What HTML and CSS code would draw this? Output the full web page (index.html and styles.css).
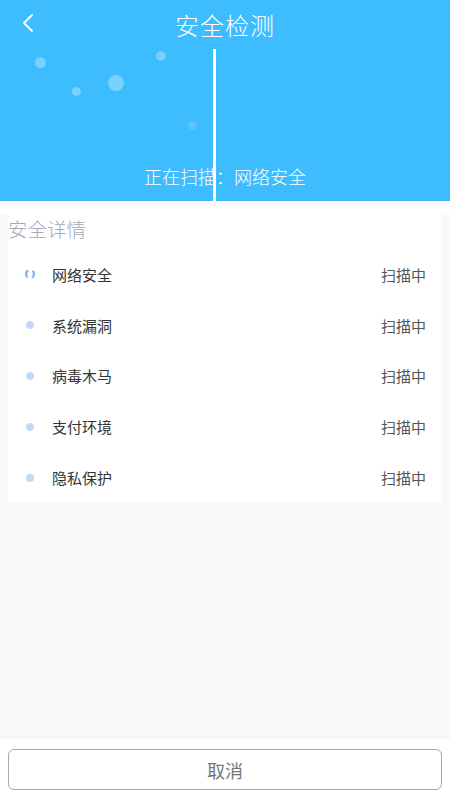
FILE: index.html
```html
<!DOCTYPE html>
<html lang="zh-CN">
<head>
    <meta charset="UTF-8">
    <meta name="viewport" content="width=device-width, initial-scale=1.0">
    <title>安全检测</title>
    <link rel="stylesheet" href="styles.css">
</head>
<body>
    <div class="header">
        <div class="nav">
            <span class="back">
                <svg width="14" height="22" viewBox="0 0 14 22"><path d="M11 3 L3 11 L11 19" fill="none" stroke="#fff" stroke-width="1.8" stroke-linecap="round" stroke-linejoin="round"/></svg>
            </span>
            <h1>安全检测</h1>
        </div>
        <div class="scan">
            <span class="bubble b1"></span>
            <span class="bubble b2"></span>
            <span class="bubble b3"></span>
            <span class="bubble b4"></span>
            <span class="bubble b5"></span>
            <span class="scan-line"></span>
            <p class="scan-text">正在扫描：网络安全</p>
        </div>
    </div>
    <div class="gap"></div>

    <div class="main">
        <div class="card">
            <h2>安全详情</h2>
            <div class="item">
                <span class="icon">
                    <svg width="12" height="12" viewBox="0 0 12 12"><circle cx="6" cy="6" r="4" fill="none" stroke="#86aef2" stroke-width="2.2" stroke-dasharray="8 4.57" stroke-dashoffset="4"/></svg>
                </span>
                <span class="name">网络安全</span>
                <span class="status">扫描中</span>
            </div>
            <div class="item">
                <span class="icon"><span class="dot"></span></span>
                <span class="name">系统漏洞</span>
                <span class="status">扫描中</span>
            </div>
            <div class="item">
                <span class="icon"><span class="dot"></span></span>
                <span class="name">病毒木马</span>
                <span class="status">扫描中</span>
            </div>
            <div class="item">
                <span class="icon"><span class="dot"></span></span>
                <span class="name">支付环境</span>
                <span class="status">扫描中</span>
            </div>
            <div class="item">
                <span class="icon"><span class="dot"></span></span>
                <span class="name">隐私保护</span>
                <span class="status">扫描中</span>
            </div>
        </div>
    </div>

    <footer>
        <button class="cancel">取消</button>
    </footer>
</body>
</html>
```

FILE: styles.css
```css
* {
    box-sizing: border-box;
}

body {
    margin: 0;
    height: 800px;
    display: flex;
    flex-direction: column;
    background-color: #f8f8f8;
    font-family: "Noto Sans CJK SC", "Noto Sans", sans-serif;
}

.header {
    background-color: #3ebdfe;
    height: 201px;
    color: #fff;
}

.nav {
    height: 49px;
    display: flex;
    align-items: center;
    justify-content: center;
    position: relative;
}

.back {
    position: absolute;
    left: 21px;
    top: 12px;
}

.nav h1 {
    margin: 0;
    font-size: 24px;
    font-weight: 300;
    letter-spacing: 1px;
}

.scan {
    height: 152px;
    position: relative;
    display: flex;
    align-items: flex-end;
    justify-content: center;
}

.scan-text {
    margin: 0 0 12px;
    font-size: 18px;
    font-weight: 300;
}

.scan-line {
    position: absolute;
    left: 213px;
    top: 0;
    width: 3px;
    height: 152px;
    background-color: #fff;
}

.bubble {
    position: absolute;
    border-radius: 50%;
    background-color: rgba(255, 255, 255, 0.3);
}
.b1 { left: 35px; top: 8px; width: 11px; height: 11px; }
.b2 { left: 72px; top: 38px; width: 9px; height: 9px; }
.b3 { left: 108px; top: 26px; width: 16px; height: 16px; }
.b4 { left: 156px; top: 2px; width: 10px; height: 10px; }
.b5 { left: 188px; top: 72px; width: 9px; height: 9px; background-color: rgba(255, 255, 255, 0.15); }

.gap {
    height: 14px;
    background-color: #fff;
}

.main {
    flex: 1;
    padding: 0 8px;
}

.card {
    background-color: #fff;
}

.card h2 {
    margin: 0;
    padding: 0 0 6px;
    line-height: 28px;
    font-size: 19.5px;
    font-weight: 300;
    color: #a2aab8;
}

.item {
    height: 50.8px;
    display: flex;
    align-items: center;
    padding: 0 16px 0 16px;
    font-size: 15px;
}

.icon {
    width: 12px;
    height: 12px;
    display: flex;
    align-items: center;
    justify-content: center;
    margin-right: 16px;
}

.dot {
    width: 8px;
    height: 8px;
    border-radius: 50%;
    background-color: #c2d9fb;
}

.name {
    flex: 1;
    color: #333;
}

.status {
    color: #555;
}

footer {
    background-color: #fff;
    height: 61px;
    padding: 10px 8px 10px;
}

.cancel {
    width: 100%;
    height: 41px;
    background-color: #fff;
    border: 1.5px solid #a8a8a8;
    border-radius: 6px;
    font-family: inherit;
    font-size: 18px;
    color: #777;
}
```
